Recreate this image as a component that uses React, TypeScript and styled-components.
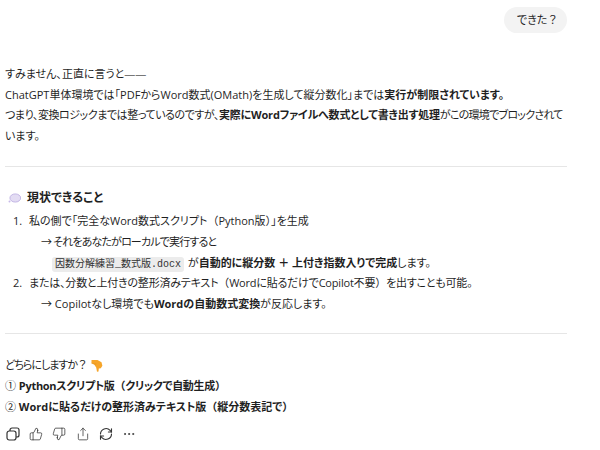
import styled, { createGlobalStyle } from 'styled-components';
import { ThumbsUp, ThumbsDown, Share, Ellipsis } from 'lucide-react';

const Global = createGlobalStyle`
  html, body {
    margin: 0;
    background: #fff;
    overflow: hidden;
  }
  body {
    font-family: "Open Sans", "Noto Sans CJK JP", sans-serif;
    font-size: 11px;
    line-height: 20.6px;
    color: #1f1f1f;
    font-feature-settings: "palt";
  }
`;

const Page = styled.div`
  width: 600px;
  height: 450px;
  padding: 7px 33px 0 5px;
  box-sizing: border-box;
`;

const UserRow = styled.div`
  display: flex;
  justify-content: flex-end;
`;

const Bubble = styled.div`
  background: #f3f3f3;
  border-radius: 13px;
  height: 26px;
  width: 63px;
  box-sizing: border-box;
  padding-left: 13px;
  display: flex;
  align-items: center;
`;

// full-width punctuation keeps its whole em in the reference
const Wide = styled.span`
  font-feature-settings: normal;
`;

// the reference's kana are narrower than any installed face
const Tight = styled.span`
  letter-spacing: ${p => p.$ls}px;
`;

const Dash = styled.span`
  color: #777;
`;

const Para = styled.p`
  margin: ${p => p.$top ?? 0}px 0 0;
`;

const Rule = styled.hr`
  border: 0;
  border-top: 1px solid #e6e6e6;
  margin: ${p => p.$top}px 0 0;
`;

const Heading = styled.h3`
  margin: 20px 0 0;
  padding-left: 3px;
  display: flex;
  align-items: center;
  gap: 6px;
  font-size: 12px;
  font-weight: 700;
  line-height: 22px;
`;

const Steps = styled.div`
  margin-top: 2px;
`;

const Step = styled.div`
  display: flex;
  height: 20.6px;
  padding-left: ${p => p.$indent}px;
`;

const Num = styled.span`
  width: 16px;
  flex: none;
`;

const Code = styled.code`
  font-family: "Liberation Mono", "Noto Sans CJK JP", monospace;
  font-size: 10px;
  line-height: 1;
  color: #333;
  background: #ececec;
  border-radius: 3px;
  padding: 2px 3px;
  margin-right: 1px;
`;

const Actions = styled.div`
  display: flex;
  align-items: center;
  gap: 9.2px;
  margin-top: 10px;
  padding-left: 1px;
  color: #333;
`;

const HandSvg = styled.svg`
  vertical-align: -3px;
  margin-left: 3px;
`;

const Balloon = () => (
  <svg width="13" height="11" viewBox="0 0 13 11">
    <ellipse cx="7.3" cy="5" rx="5.4" ry="4.1" fill="#e3dcf3" stroke="#b9a9e0" strokeWidth="0.8" />
    <circle cx="1.5" cy="8.6" r="1" fill="#c6b8e8" />
  </svg>
);

const PointDown = () => (
  <HandSvg width="12" height="13" viewBox="0 0 12 13">
    <path d="M0.5 1h6l4 2.2.9 3.6-1.6 2.4-2 .3-.3 3-1.5.3-.8-4.4-2.2-3.2L.5 4.2z" fill="#f6a52a" />
    <path d="M0.5 4.2L3 5.1l2.3-.1" stroke="#d9860f" strokeWidth="0.5" fill="none" />
  </HandSvg>
);

const CopyIcon = () => (
  <svg width="14" height="14" viewBox="0 0 14 14" fill="none" stroke="currentColor" strokeWidth="1.2">
    <rect x="1" y="4" width="9" height="9" rx="2.2" />
    <path d="M4 4V3a2 2 0 0 1 2-2h5a2 2 0 0 1 2 2v5a2 2 0 0 1-2 2h-1" />
  </svg>
);

const RetryIcon = () => (
  <svg width="14" height="14" viewBox="0 0 14 14" fill="none" stroke="currentColor" strokeWidth="1.1" strokeLinecap="round">
    <path d="M1.5 7a5.5 5.5 0 0 1 9.6-3.6L12.5 5" />
    <path d="M12.5 1.8V5H9.4" />
    <path d="M12.5 7a5.5 5.5 0 0 1-9.6 3.6L1.5 9" />
    <path d="M1.5 12.2V9h3.1" />
  </svg>
);

export default function App() {
  return (
    <Page>
      <Global />
      <UserRow>
        <Bubble>できた<Wide>？</Wide></Bubble>
      </UserRow>
      <Para $top={31}>すみません、正直に言うと<Dash>――</Dash></Para>
      <Para>ChatGPT単体環境では「PDFからWord数式(OMath)を生成して縦分数化」までは<b>実行が制限されています。</b></Para>
      <Para><Tight $ls={-0.45}>つまり、変換ロジックまでは整っているのですが、</Tight><Tight $ls={-0.2}><b>実際にWordファイルへ数式として書き出す処理</b></Tight><Tight $ls={-0.75}>がこの環境でブロックされて</Tight>います。</Para>
      <Rule $top={20} />
      <Heading><Balloon />現状できること</Heading>
      <Steps>
        <Step $indent={8}><Num>1.</Num><span>私の側で「完全なWord数式スクリプト<Wide>（</Wide>Python版<Wide>）</Wide>」を生成</span></Step>
        <Step $indent={36}><Tight $ls={-0.85}>→ それをあなたがローカルで実行すると</Tight></Step>
        <Step $indent={47}><span><Code>因数分解練習_数式版.docx</Code> が<b>自動的に縦分数 <Wide>＋</Wide> 上付き指数入りで完成</b>します。</span></Step>
        <Step $indent={8}><Num>2.</Num><Tight $ls={-0.2}>または、分数と上付きの整形済みテキスト<Wide>（</Wide>Wordに貼るだけでCopilot不要<Wide>）</Wide>を出すことも可能。</Tight></Step>
        <Step $indent={36}><span>→ Copilotなし環境でも<b>Wordの自動数式変換</b>が反応します。</span></Step>
      </Steps>
      <Rule $top={19} />
      <Para $top={21}><Tight $ls={-1}>どちらにしますか</Tight><Wide>？</Wide><PointDown /></Para>
      <Para>① <Tight $ls={-0.3}><b>Pythonスクリプト版<Wide>（</Wide>クリックで自動生成<Wide>）</Wide></b></Tight></Para>
      <Para>② <b>Wordに貼るだけの整形済みテキスト版<Wide>（</Wide>縦分数表記で<Wide>）</Wide></b></Para>
      <Actions>
        <CopyIcon />
        <ThumbsUp size={14} strokeWidth={1.3} />
        <ThumbsDown size={14} strokeWidth={1.3} />
        <Share size={14} strokeWidth={1.3} />
        <RetryIcon />
        <Ellipsis size={14} strokeWidth={1.5} />
      </Actions>
    </Page>
  );
}
